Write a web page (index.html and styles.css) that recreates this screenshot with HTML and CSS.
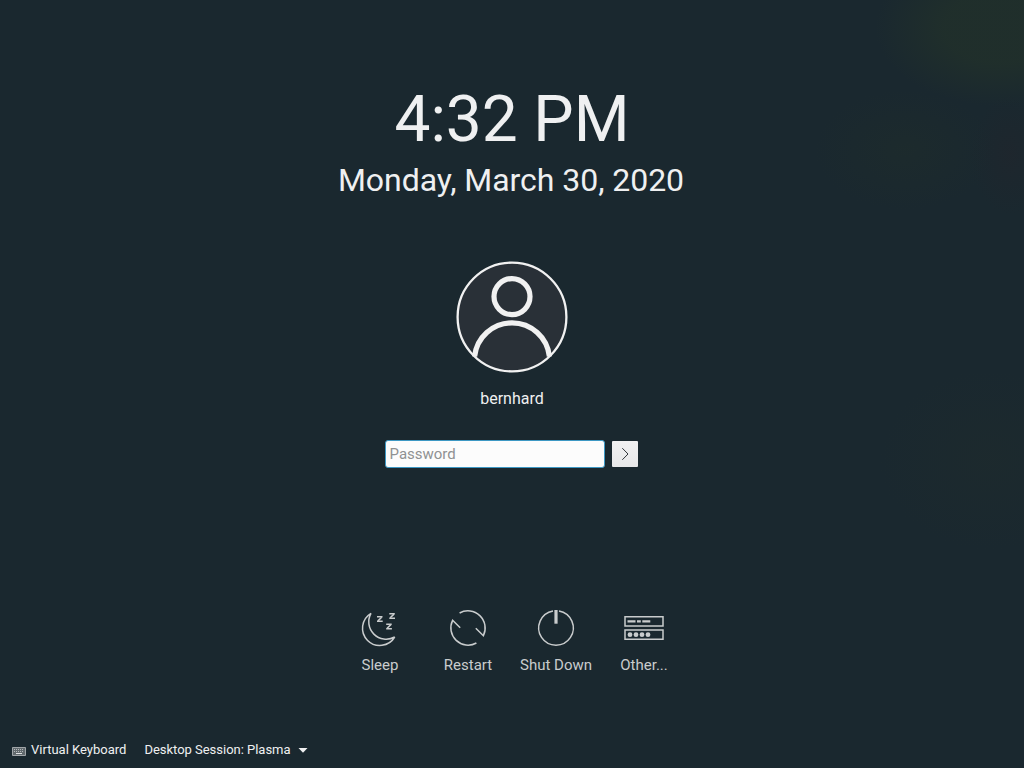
FILE: index.html
```html
<!DOCTYPE html>
<html lang="en">
<head>
<meta charset="utf-8">
<title>Login</title>
<link rel="stylesheet" href="styles.css">
</head>
<body>
<main class="greeter">
  <header class="clock">
    <div class="time">4:32 PM</div>
    <div class="date">Monday, March 30, 2020</div>
  </header>
  <section class="user">
    <svg class="avatar" viewBox="0 0 112 112" width="112" height="112" fill="none" stroke="#f1f1f1">
      <circle cx="56" cy="56" r="54.4" fill="#293037" stroke-width="2.3"/>
      <circle cx="56" cy="35.6" r="18" stroke-width="5.2"/>
      <path d="M18.6 95.6A37.6 37.6 0 0 1 93.4 95.6" stroke-width="5.2"/>
    </svg>
    <div class="name">bernhard</div>
  </section>
  <form class="login">
    <input class="password" type="password" placeholder="Password" aria-label="Password">
    <button class="submit" type="button" aria-label="Log in">
      <svg viewBox="0 0 26 26" width="26" height="26" fill="none" stroke="#31363b" stroke-width="1"><path d="M10.3 7.2L16 13l-5.7 5.8"/></svg>
    </button>
  </form>
  <nav class="actions">
    <div class="action">
      <svg viewBox="0 0 48 48" width="48" height="48" fill="none" stroke="#c9cccd" stroke-width="1.5" stroke-linejoin="bevel">
        <path d="M15 9.3A17.3 17.3 0 1 0 38.7 33A17.4 17.4 0 0 1 15 9.3Z"/>
        <path d="M21 12.8H26.5M21 17.3H26.7M33.3 9.7H38.8M33.3 14.2H39M30.2 20.2H35.7M30.2 24.7H35.9"/>
        <path d="M25.7 13.2L21.9 16.9M38 10.1L34.2 13.8M34.9 20.6L31.1 24.3"/>
      </svg>
      <span>Sleep</span>
    </div>
    <div class="action">
      <svg viewBox="0 0 48 48" width="48" height="48" fill="none" stroke="#c9cccd" stroke-width="1.5">
        <path d="M15.6 9A17.25 17.25 0 0 1 39.4 31.7L31.8 24.2M32.4 39A17.25 17.25 0 0 1 8.6 16.3L16.2 23.8"/>
      </svg>
      <span>Restart</span>
    </div>
    <div class="action">
      <svg viewBox="0 0 48 48" width="48" height="48" fill="none" stroke="#c9cccd" stroke-width="1.5">
        <path d="M21 6.9A17.3 17.3 0 1 0 27 6.9"/><path d="M24 6V19.7" stroke-width="3.2"/>
      </svg>
      <span>Shut Down</span>
    </div>
    <div class="action">
      <svg viewBox="0 0 48 48" width="48" height="48" fill="none" stroke="#c9cccd" stroke-width="1.5">
        <path d="M5 12.7H43V22H5ZM5 26H43V35.3H5Z"/>
        <path d="M7.5 17.4H15.5M17 17.4H20.8M22.3 17.4H30.3" stroke-width="2.2"/>
        <g fill="#c9cccd" stroke="none"><circle cx="10" cy="30.7" r="2.4"/><circle cx="16" cy="30.7" r="2.4"/><circle cx="22" cy="30.7" r="2.4"/><circle cx="28" cy="30.7" r="2.4"/></g>
      </svg>
      <span>Other...</span>
    </div>
  </nav>
  <footer class="footer">
    <svg class="keyboard" viewBox="0 0 14 9" width="14" height="9">
      <path d="M.5.5H13.5V8.5H.5Z" fill="#626a6e" stroke="#a0a5a8"/>
      <path d="M2 2.5H12M2 4.5H12" stroke="#b5b9bb" stroke-dasharray="1 1"/><path d="M4 6.5H10" stroke="#dfe1e2"/>
    </svg>
    <span>Virtual Keyboard</span>
    <span class="session">Desktop Session: Plasma</span>
    <svg class="arrow" viewBox="0 0 10 5" width="10" height="5"><path d="M.5 0H9.5L5 4.8Z" fill="#eff0f1"/></svg>
  </footer>
</main>
</body>
</html>
```

FILE: styles.css
```css
* { box-sizing: border-box; }
body { margin: 0; }
.greeter {
  display: flex;
  flex-direction: column;
  align-items: center;
  width: 1024px;
  height: 768px;
  overflow: hidden;
  font-family: Roboto, "Noto Sans", sans-serif;
  color: #eff0f1;
  background:
    radial-gradient(ellipse 125px 78px at 1000px 28px, rgba(32, 47, 43, .95) 45%, rgba(29, 44, 44, 0)),
    radial-gradient(ellipse 90px 60px at 905px 150px, rgba(29, 43, 44, .8), rgba(29, 43, 44, 0)),
    radial-gradient(ellipse 40px 60px at 1010px 155px, rgba(31, 38, 45, .8), rgba(31, 38, 45, 0)),
    radial-gradient(ellipse 110px 90px at 990px 460px, rgba(29, 42, 45, .8), rgba(29, 42, 45, 0)),
    #1a282f;
}
.clock { padding-top: 82px; text-align: center; }
.time { font-size: 64px; line-height: 76px; letter-spacing: -0.1px; }
.date { margin: 3px 2px 0 0; font-size: 32px; line-height: 38px; letter-spacing: -0.05px; }
.user { display: flex; flex-direction: column; align-items: center; margin-top: 62px; }
.avatar { display: block; }
.name { margin-top: 16px; font-size: 16px; line-height: 20px; }
.login { display: flex; align-items: center; gap: 7px; margin: 31px 2px 0 0; height: 28px; }
.password {
  width: 220px;
  height: 28px;
  padding: 0 4px;
  border: 1px solid #3d98c4;
  border-radius: 3px;
  outline: none;
  background: #fcfcfc;
  font: 15px Roboto, "Noto Sans", sans-serif;
}
.password::placeholder { color: #8f9192; opacity: 1; }
.submit { width: 26px; height: 26px; padding: 0; border: 0; border-radius: 1px; background: linear-gradient(#f1f1f2, #e7e8e9); }
.submit svg { display: block; }
.actions { display: grid; grid-template-columns: repeat(4, 88px); margin-top: 136px; color: #c9cccd; }
.action { display: flex; flex-direction: column; align-items: center; font-size: 15px; line-height: 18px; white-space: nowrap; }
.action span { margin-top: 4px; }
.footer { display: flex; align-items: center; align-self: stretch; margin-top: auto; height: 36px; padding-left: 12px; font-size: 13px; line-height: 16px; }
.keyboard { margin: 3px 5px 0 0; }
.session { margin-left: 18px; letter-spacing: -0.02px; }
.arrow { margin-left: 7px; }
```
